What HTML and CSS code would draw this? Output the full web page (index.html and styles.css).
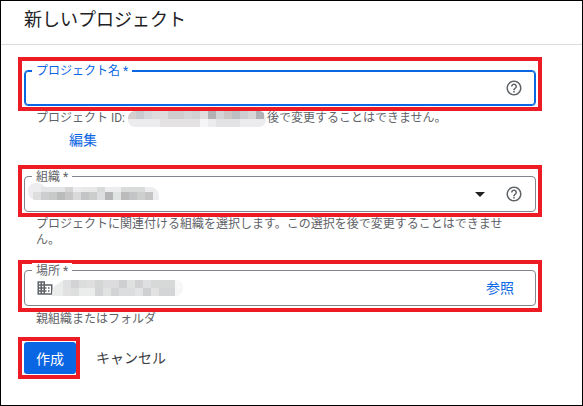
FILE: index.html
```
<!DOCTYPE html>
<html lang="ja">
<head>
    <meta charset="UTF-8">
    <meta name="viewport" content="width=device-width, initial-scale=1.0">
    <title>新しいプロジェクト</title>
    <link rel="stylesheet" href="styles.css">
</head>
<body>

    <header class="page-header">
        <h1>新しいプロジェクト</h1>
    </header>

    <form class="project-form">
        <!-- Project name -->
        <div class="highlight highlight-name">
            <div class="field field-active">
                <label for="project-name">プロジェクト名 *</label>
                <input type="text" id="project-name" class="field-input">
                <button type="button" class="icon-button" aria-label="ヘルプ">
                    <svg width="18" height="18" viewBox="0 0 24 24"><path d="M11 18h2v-2h-2v2zm1-16C6.48 2 2 6.48 2 12s4.48 10 10 10 10-4.48 10-10S17.52 2 12 2zm0 18c-4.41 0-8-3.59-8-8s3.59-8 8-8 8 3.59 8 8-3.59 8-8 8zm0-14c-2.21 0-4 1.79-4 4h2c0-1.1.9-2 2-2s2 .9 2 2c0 2-3 1.75-3 5h2c0-2.25 3-2.5 3-5 0-2.21-1.79-4-4-4z"/></svg>
                </button>
            </div>
        </div>
        <p class="hint">プロジェクト ID:
            <svg class="hidden-id" width="138" height="16" viewBox="0 0 138 16">
                <clipPath id="clip-id"><rect width="138" height="16" rx="7"/></clipPath>
                <g clip-path="url(#clip-id)">
                    <rect width="138" height="16" fill="#ececee"/>
                    <rect width="8" height="8" fill="#d6cfd0"/>
                    <rect x="8" width="8" height="8" fill="#c9cacf"/>
                    <rect x="16" width="8" height="8" fill="#d6d7db"/>
                    <rect x="24" width="16" height="8" fill="#dedcdd"/>
                    <rect x="40" width="16" height="8" fill="#cfcdce"/>
                    <rect x="56" width="8" height="8" fill="#d5d5d7"/>
                    <rect x="64" width="8" height="8" fill="#d1d0d3"/>
                    <rect x="72" width="8" height="8" fill="#e0dcdd"/>
                    <rect x="80" width="8" height="8" fill="#b3b1b4"/>
                    <rect x="88" width="8" height="8" fill="#d3d3d6"/>
                    <rect x="96" width="8" height="8" fill="#cbc5c6"/>
                    <rect x="104" width="8" height="8" fill="#bdbec4"/>
                    <rect x="112" width="8" height="8" fill="#ceced2"/>
                    <rect x="120" width="8" height="8" fill="#d8d6d7"/>
                    <rect x="128" width="8" height="8" fill="#b2b1b6"/>
                    <rect x="32" y="8" width="40" height="8" fill="#e4e2e3"/>
                    <rect x="72" y="8" width="8" height="8" fill="#f5f5f7"/>
                    <rect x="88" y="8" width="24" height="8" fill="#e3e2e4"/>
                </g>
            </svg>
            後で変更することはできません。
        </p>
        <button type="button" class="text-button edit-button">編集</button>

        <!-- Organization -->
        <div class="highlight">
            <div class="field">
                <label for="organization">組織 *</label>
                <select id="organization" class="field-input">
                    <option value=""></option>
                </select>
                <svg class="hidden-value hidden-org" width="131" height="18" viewBox="0 0 131 18">
                    <clipPath id="clip-org"><path d="M8 0c5 0 7 2 9 4h105c5 0 9 4 9 9v4H8C3 17 0 13 0 8s3-8 8-8z"/></clipPath>
                    <g clip-path="url(#clip-org)">
                        <rect width="131" height="18" fill="#ededef"/>
                        <rect x="13" y="4" width="24" height="5" fill="#e4e5e6"/>
                        <rect x="37" y="4" width="8" height="5" fill="#d5d5d6"/>
                        <rect x="53" y="4" width="16" height="5" fill="#e9e9ea"/>
                        <rect x="69" y="4" width="8" height="5" fill="#d9dbdb"/>
                        <rect x="93" y="4" width="24" height="5" fill="#dadcdc"/>
                        <rect x="5" y="9" width="8" height="8" fill="#dedede"/>
                        <rect x="13" y="9" width="8" height="8" fill="#cdcecf"/>
                        <rect x="21" y="9" width="8" height="8" fill="#c8cac9"/>
                        <rect x="29" y="9" width="8" height="8" fill="#b9bcbb"/>
                        <rect x="37" y="9" width="8" height="8" fill="#c7c7c8"/>
                        <rect x="45" y="9" width="8" height="8" fill="#dadada"/>
                        <rect x="53" y="9" width="8" height="8" fill="#c3c4c6"/>
                        <rect x="61" y="9" width="8" height="8" fill="#cbcdcc"/>
                        <rect x="69" y="9" width="8" height="8" fill="#dddedf"/>
                        <rect x="77" y="9" width="8" height="8" fill="#b6b6b8"/>
                        <rect x="85" y="9" width="8" height="8" fill="#dfe3e1"/>
                        <rect x="93" y="9" width="8" height="8" fill="#bbbbbc"/>
                        <rect x="101" y="9" width="8" height="8" fill="#c4c5c6"/>
                        <rect x="109" y="9" width="8" height="8" fill="#cdcfce"/>
                        <rect x="117" y="9" width="8" height="8" fill="#c5c5c6"/>
                    </g>
                </svg>
                <svg class="arrow" width="24" height="24" viewBox="0 0 24 24"><path d="M7 10l5 5 5-5z"/></svg>
                <button type="button" class="icon-button" aria-label="ヘルプ">
                    <svg width="18" height="18" viewBox="0 0 24 24"><path d="M11 18h2v-2h-2v2zm1-16C6.48 2 2 6.48 2 12s4.48 10 10 10 10-4.48 10-10S17.52 2 12 2zm0 18c-4.41 0-8-3.59-8-8s3.59-8 8-8 8 3.59 8 8-3.59 8-8 8zm0-14c-2.21 0-4 1.79-4 4h2c0-1.1.9-2 2-2s2 .9 2 2c0 2-3 1.75-3 5h2c0-2.25 3-2.5 3-5 0-2.21-1.79-4-4-4z"/></svg>
                </button>
            </div>
        </div>
        <p class="hint">プロジェクトに関連付ける組織を選択します。この選択を後で変更することはできません。</p>

        <!-- Location -->
        <div class="highlight highlight-location">
            <div class="field">
                <label for="location">場所 *</label>
                <svg class="building" width="18" height="18" viewBox="0 0 24 24"><path d="M12 7V3H2v18h20V7H12zM6 19H4v-2h2v2zm0-4H4v-2h2v2zm0-4H4V9h2v2zm0-4H4V5h2v2zm4 12H8v-2h2v2zm0-4H8v-2h2v2zm0-4H8V9h2v2zm0-4H8V5h2v2zm10 12h-8v-2h2v-2h-2v-2h2v-2h-2V9h8v10zm-2-8h-2v2h2v-2zm0 4h-2v2h2v-2z"/></svg>
                <input type="text" id="location" class="field-input" readonly>
                <svg class="hidden-value hidden-location" width="131" height="16" viewBox="0 0 131 16">
                    <clipPath id="clip-location"><path d="M14 0h110c4 0 7 3 7 7s-3 9-8 9H0c0-5 1-9 4-11 3-1 5-5 10-5z"/></clipPath>
                    <g clip-path="url(#clip-location)">
                        <rect width="131" height="16" fill="#ebecec"/>
                        <rect x="11" width="8" height="8" fill="#dfe0e1"/>
                        <rect x="19" width="8" height="8" fill="#d3d3d5"/>
                        <rect x="27" width="8" height="8" fill="#dadddc"/>
                        <rect x="35" width="8" height="8" fill="#dfdfe0"/>
                        <rect x="43" width="8" height="8" fill="#d3d6d5"/>
                        <rect x="51" width="16" height="8" fill="#dcdcde"/>
                        <rect x="67" width="8" height="8" fill="#cdcfd0"/>
                        <rect x="75" width="8" height="8" fill="#dfe1e0"/>
                        <rect x="83" width="8" height="8" fill="#d1d1d3"/>
                        <rect x="91" width="8" height="8" fill="#dedfe0"/>
                        <rect x="99" width="24" height="8" fill="#d7d9d9"/>
                        <rect x="123" width="8" height="8" fill="#f8f8f9"/>
                        <rect x="11" y="8" width="8" height="8" fill="#e2e2e3"/>
                        <rect x="19" y="8" width="8" height="8" fill="#dddfdf"/>
                        <rect x="43" y="8" width="8" height="8" fill="#d3d4d5"/>
                        <rect x="51" y="8" width="8" height="8" fill="#e1e3e2"/>
                        <rect x="59" y="8" width="8" height="8" fill="#d3d4d5"/>
                        <rect x="67" y="8" width="16" height="8" fill="#dcddde"/>
                        <rect x="83" y="8" width="8" height="8" fill="#e3e4e5"/>
                        <rect x="91" y="8" width="8" height="8" fill="#cfd0d2"/>
                        <rect x="99" y="8" width="8" height="8" fill="#e2e2e3"/>
                        <rect x="107" y="8" width="16" height="8" fill="#d4d5d6"/>
                        <rect x="123" y="8" width="8" height="8" fill="#f6f6f7"/>
                    </g>
                </svg>
                <button type="button" class="text-button browse-button">参照</button>
            </div>
        </div>
        <p class="hint">親組織またはフォルダ</p>

        <div class="actions">
            <div class="highlight highlight-create">
                <button type="submit" class="create-button">作成</button>
            </div>
            <button type="button" class="text-button cancel-button">キャンセル</button>
        </div>
    </form>

</body>
</html>
```
FILE: styles.css
```
* {
    box-sizing: border-box;
}

body {
    margin: 0;
    min-height: 100vh;
    border: 1px solid #000;
    background-color: #fff;
    color: #202124;
    font-family: Roboto, 'Noto Sans CJK JP', sans-serif;
}

.page-header {
    padding: 7px 23px 12px;
    border-bottom: 1px solid #dadce0;
}

.page-header h1 {
    margin: 0;
    font-size: 18px;
    font-weight: 400;
    line-height: 24px;
}

.project-form {
    padding: 12px 40px 12px 17px;
}

button {
    padding: 0;
    border: none;
    background: none;
    font-family: inherit;
    cursor: pointer;
}

/* Red frames around the parts to fill in */
.highlight {
    padding: 7px 2px 1px;
    border: 4px solid #ed1c24;
}

.highlight-name {
    padding-top: 9px;
}

.highlight-location {
    margin-top: 12px;
    padding: 6px 2px 2px;
}

.highlight-create {
    padding: 1px 0 1px 2px;
}

.field {
    position: relative;
    display: flex;
    align-items: center;
    height: 36px;
    padding: 0 12px 0 11px;
    border: 1px solid #80868b;
    border-radius: 4px;
}

.field label {
    position: absolute;
    top: -8px;
    left: 7px;
    padding: 0 4px;
    background-color: #fff;
    color: #5f6368;
    font-size: 12px;
    line-height: 16px;
}

.field-active {
    border-color: #0b66e4;
    box-shadow: inset 0 0 0 1px #0b66e4;
}

.field-active label {
    color: #0b66e4;
}

.field-input {
    flex: 1;
    min-width: 0;
    height: 28px;
    padding: 0;
    border: none;
    outline: none;
    appearance: none;
    background: none;
    font-family: inherit;
    font-size: 14px;
}

.icon-button {
    display: flex;
    fill: #5f6368;
}

.arrow {
    margin-right: 13px;
    fill: #202124;
    pointer-events: none;
}

.building {
    fill: #5f6368;
}

/* Blocked-out values */
.hidden-value {
    position: absolute;
    pointer-events: none;
}

.hidden-org {
    top: 6px;
    left: 3px;
}

.hidden-location {
    top: 9px;
    left: 27px;
}

.hidden-id {
    margin-right: -2px;
    vertical-align: middle;
}

.hint {
    margin: -1px 0 0;
    padding: 0 18px;
    color: #5f6368;
    font-size: 12px;
    line-height: 16px;
}

.text-button {
    color: #0b66e4;
    font-size: 14px;
    line-height: 16px;
}

.edit-button {
    display: block;
    margin: 5px 0 17px 51px;
}

.browse-button {
    margin-right: 9px;
}

.actions {
    display: flex;
    align-items: center;
    gap: 16px;
    margin-top: 10px;
}

.create-button {
    display: block;
    height: 32px;
    padding: 0 12px;
    border-radius: 3px;
    background-color: #0b66e4;
    color: #fff;
    font-size: 14px;
}

.cancel-button {
    color: #3c4043;
}
```
